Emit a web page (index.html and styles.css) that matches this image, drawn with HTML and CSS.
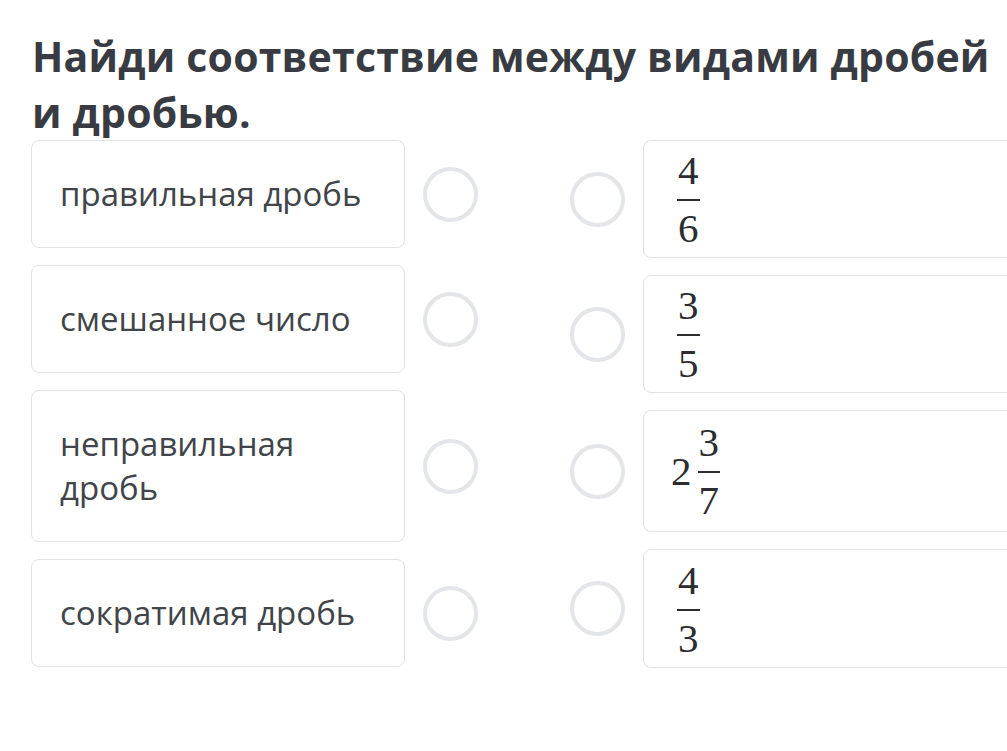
FILE: index.html
```html
<!DOCTYPE html>
<html lang="ru">
<head>
<meta charset="utf-8">
<link rel="stylesheet" href="styles.css">
</head>
<body>
<main class="page">
  <h1 class="title">Найди соответствие между видами дробей и дробью.</h1>
  <div class="match">
    <div class="col col-left">
      <div class="row">
        <div class="card card-text">правильная дробь</div>
        <span class="radio"></span>
      </div>
      <div class="row">
        <div class="card card-text">смешанное число</div>
        <span class="radio"></span>
      </div>
      <div class="row">
        <div class="card card-text">неправильная<br>дробь</div>
        <span class="radio"></span>
      </div>
      <div class="row">
        <div class="card card-text">сократимая дробь</div>
        <span class="radio"></span>
      </div>
    </div>
    <div class="col col-right">
      <div class="row">
        <span class="radio"></span>
        <div class="card card-math r1">
          <span class="frac"><span class="num">4</span><span class="den">6</span></span>
        </div>
      </div>
      <div class="row">
        <span class="radio"></span>
        <div class="card card-math r2">
          <span class="frac"><span class="num">3</span><span class="den">5</span></span>
        </div>
      </div>
      <div class="row">
        <span class="radio"></span>
        <div class="card card-math r3">
          <span class="whole">2</span><span class="frac"><span class="num">3</span><span class="den">7</span></span>
        </div>
      </div>
      <div class="row">
        <span class="radio"></span>
        <div class="card card-math r4">
          <span class="frac"><span class="num">4</span><span class="den">3</span></span>
        </div>
      </div>
    </div>
  </div>
</main>
</body>
</html>
```

FILE: styles.css
```css
html, body {
  margin: 0;
  padding: 0;
  background: #ffffff;
  overflow: hidden;
}

.page {
  width: 1100px;
  padding: 28px 0 0 31px;
  box-sizing: border-box;
  font-family: "Open Sans", "Liberation Sans", sans-serif;
}

.title {
  margin: 0 0 0 1px;
  width: 975px;
  font-size: 41px;
  line-height: 56px;
  font-weight: 700;
  color: #383b42;
  letter-spacing: 0.2px;
}

.match {
  display: flex;
  align-items: flex-start;
  gap: 92px;
}

.col {
  display: flex;
  flex-direction: column;
  gap: 17px;
}

.row {
  display: flex;
  align-items: center;
  gap: 18px;
}

.card {
  box-sizing: border-box;
  border: 1.5px solid #e1e2e4;
  border-radius: 8px;
  background: #fff;
}

.card-text {
  width: 374px;
  padding: 31px 28px 31px 28px;
  font-size: 33px;
  line-height: 44px;
  color: #414449;
}

.radio {
  flex: none;
  width: 55px;
  height: 55px;
  box-sizing: border-box;
  border: 4.5px solid #e3e5e8;
  border-radius: 50%;
}

.card-math {
  width: 420px;
  display: flex;
  align-items: center;
  padding: 0 0 0 30px;
  font-family: "Liberation Serif", "DejaVu Serif", serif;
  color: #2b2d31;
  font-size: 41px;
}

.r1, .r2 { height: 118px; }
.r3 { height: 122px; padding-left: 27px; }
.r4 { height: 119px; }

.frac {
  display: inline-flex;
  flex-direction: column;
  align-items: center;
  padding: 0 3px;
}

.num, .den {
  display: block;
  line-height: 34px;
  padding: 0 1px;
}

.num {
  padding-bottom: 12px;
  border-bottom: 2px solid #2b2d31;
}

.den {
  padding-top: 10px;
}

.whole {
  line-height: 40px;
  margin-right: 3px;
}
```
